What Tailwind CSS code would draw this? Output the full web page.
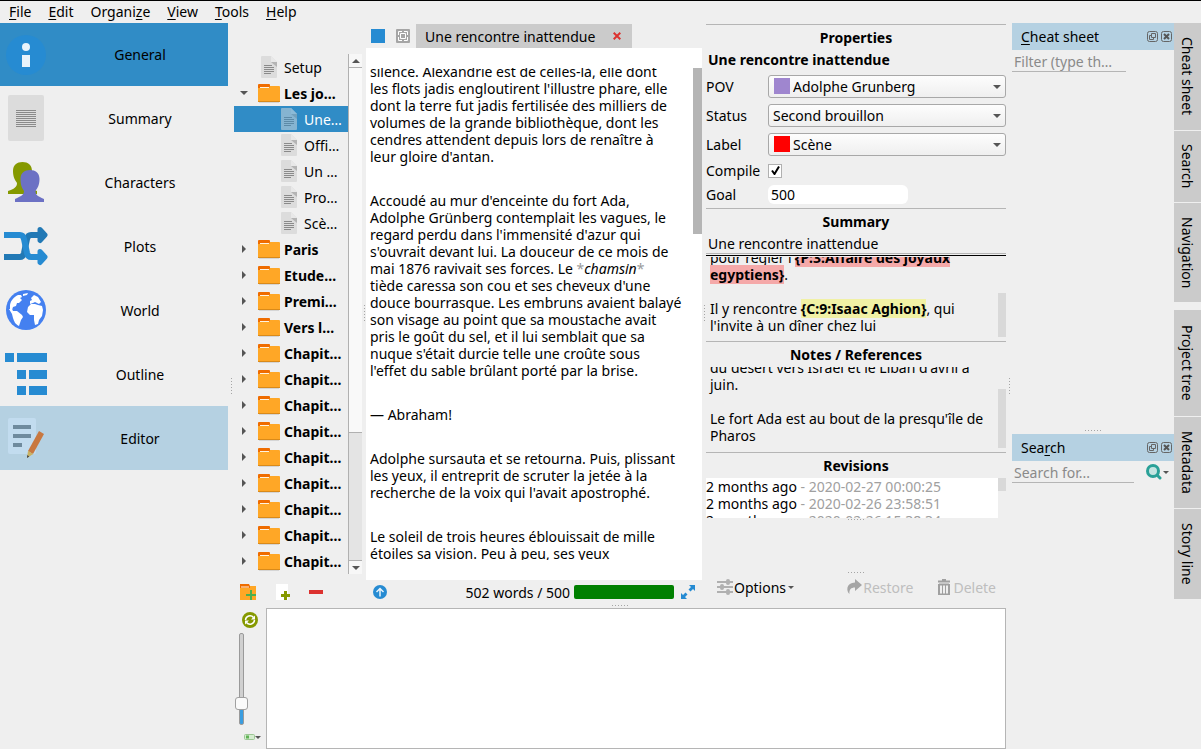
<!DOCTYPE html>
<html lang="fr">

<head>
  <title>Editor</title>
  <meta charset="UTF-8">
  <meta name="viewport" content="width=device-width, initial-scale=1">
  <script src="https://cdn.jsdelivr.net/npm/@tailwindcss/browser@4"></script>
</head>

<body class="flex h-screen flex-col overflow-hidden border-t border-black bg-[#efefef] font-['Noto_Sans',sans-serif] text-[14px] leading-[17px] text-black">

  <!-- Shared icons -->
  <svg class="hidden">
    <symbol id="doc" viewBox="0 0 16 22">
      <path d="M1 0h9l6 6v15a1 1 0 0 1-1 1H1a1 1 0 0 1-1-1V1a1 1 0 0 1 1-1z" fill="#dcdcdc" />
      <path d="M10 0l6 6h-6z" fill="#e8e8e8" />
      <path d="M10 6h6v5z" fill="#b4b4b4" />
      <path d="M3 9.500h8M3 11.500h10M3 13.500h10M3 15.500h10M3 17.500h7" stroke="#8a8a8a" />
    </symbol>
    <symbol id="folder" viewBox="0 0 22 19">
      <path d="M1 18h20v1H1z" fill="#d5d5d5" />
      <path d="M0 1q0-1 1-1h10q1 0 1 1v3H0z" fill="#ef6c00" />
      <path d="M2 3h9v2H2z" fill="#fff3e0" />
      <path d="M0 4h11l1-2h9q1 0 1 1v14q0 1-1 1H1q-1 0-1-1z" fill="#ffa726" />
      <path d="M0 17h22v1H0z" fill="#d98a1a" />
    </symbol>
    <symbol id="down" viewBox="0 0 8 4">
      <path d="M0 0h8L4 4z" fill="#555" />
    </symbol>
    <symbol id="float" viewBox="0 0 11 11">
      <rect x=".5" y=".5" width="10" height="10" rx="2" fill="none" stroke="#666" />
      <path d="M4.500 2.500h4v4h-4zM4 4.500H2.500v4h4V7" fill="none" stroke="#666" />
    </symbol>
    <symbol id="close" viewBox="0 0 11 11">
      <rect x=".5" y=".5" width="10" height="10" rx="2" fill="none" stroke="#666" />
      <path d="M3 3l5 5M8 3L3 8" stroke="#555" stroke-width="2" />
    </symbol>
  </svg>

  <nav class="flex h-[22px] shrink-0 items-start gap-[17px] pt-[2px] pl-[9px]">
    <a href="#"><u class="underline-offset-2">F</u>ile</a>
    <a href="#"><u class="underline-offset-2">E</u>dit</a>
    <a href="#">Organi<u class="underline-offset-2">z</u>e</a>
    <a href="#"><u class="underline-offset-2">V</u>iew</a>
    <a href="#"><u class="underline-offset-2">T</u>ools</a>
    <a href="#"><u class="underline-offset-2">H</u>elp</a>
  </nav>

  <div class="flex min-h-0 flex-1">

    <!-- Sections -->
    <aside class="flex w-[228px] shrink-0 flex-col">
      <a href="#" class="flex h-[63px] items-center bg-[#308cc6]">
        <span class="flex w-[52px] justify-center">
          <svg class="size-10" viewBox="0 0 40 40">
            <circle cx="20" cy="20" r="20" fill="#268bd2" />
            <circle cx="20" cy="12" r="4" fill="#e8f3fb" />
            <path d="M16 20h8v12h-8z" fill="#e8f3fb" />
          </svg>
        </span>
        <span class="flex-1 text-center">General</span>
      </a>
      <a href="#" class="flex h-16 items-center">
        <span class="flex w-[52px] justify-center">
          <svg class="h-[46px] w-9" viewBox="0 0 36 46">
            <rect width="36" height="46" rx="2" fill="#dcdcdc" />
            <path d="M8 15.500h20M8 17.500h20M8 19.500h20M8 21.500h20M8 23.500h20M8 25.500h20M8 27.500h20M8 29.500h20M8 31.500h20" stroke="#8a8a8a" />
          </svg>
        </span>
        <span class="flex-1 text-center">Summary</span>
      </a>
      <a href="#" class="flex h-16 items-center">
        <span class="flex w-[52px] justify-center">
          <svg class="h-10 w-9" viewBox="0 0 36 40">
            <path d="M5 9C5 3 9 0 14.500 0S24 3 24 9c0 6-2 9-4 12 0 4 2 5 9 8v3H0v-3c6-2 9-4 9-8C7 18 5 15 5 9z" fill="#859900" />
            <path d="M12.500 17c0-6 4-9 9.500-9s9.500 3 9.500 9c0 6-2 9-4 12 0 4 2 5 8.500 8v3H7v-3c6-3 9-4 9-8-2-3-3.500-6-3.500-12z" fill="#6c71c4" />
          </svg>
        </span>
        <span class="flex-1 text-center">Characters</span>
      </a>
      <a href="#" class="flex h-16 items-center">
        <span class="flex w-[52px] justify-center">
          <svg class="h-10 w-11" viewBox="0 0 44 40" fill="none" stroke-width="6" stroke-linejoin="round">
            <path d="M0 31h16q3 0 4-4l3-14q1-4 4-4h10" stroke="#2279b5" />
            <path d="M36 3.500L41 9l-5 5.500z" fill="#2279b5" stroke="#2279b5" stroke-width="5" />
            <path d="M0 9h16q3 0 4 4l3 14q1 4 4 4h10" stroke="#268bd2" />
            <path d="M36 25.500L41 31l-5 5.500z" fill="#268bd2" stroke="#268bd2" stroke-width="5" />
          </svg>
        </span>
        <span class="flex-1 text-center">Plots</span>
      </a>
      <a href="#" class="flex h-16 items-center">
        <span class="flex w-[52px] justify-center">
          <svg class="size-10" viewBox="0 0 40 40">
            <circle cx="20" cy="20" r="20" fill="#4480f0" />
            <path d="M4 15c1-5 4-8 8-10l3 0 1 2-2 1 2 2-3 3-2 0-1 3-3 1-1 3-2-1zM17 4l5-1-1 2-4 1z" fill="#fff" />
            <path d="M3 19l3 0 1 2 4-0 5 4 1 2-2 3-1 3-1 3C9 34 8 31 7 28l-1-4z" fill="#fff" />
            <path d="M25 8l3-3 4 2 3 5-2 2-4-2-2 1-3 1 0-3 2-1zM22 17l3-3 4 0 3 1 4 1 1 4-1 6-3 4-1 4-3 1-1-5 0-5-4 0-3-3z" fill="#fff" />
          </svg>
        </span>
        <span class="flex-1 text-center">World</span>
      </a>
      <a href="#" class="flex h-16 items-center">
        <span class="flex w-[52px] justify-center">
          <svg class="h-[42px] w-[42px]" viewBox="0 0 42 42" fill="#268bd2">
            <path d="M0 0h9v9H0zM12 0h30v9H12zM12 17h9v9h-9zM24 17h18v9H24zM12 33h9v9h-9zM24 33h18v9H24z" />
          </svg>
        </span>
        <span class="flex-1 text-center">Outline</span>
      </a>
      <a href="#" class="flex h-16 items-center bg-[#b5d1e2]">
        <span class="flex w-[52px] justify-center">
          <svg class="h-10 w-9" viewBox="0 0 36 40">
            <rect width="28" height="36" rx="2" fill="#c2dcef" />
            <path d="M5 9h18M5 18h18M5 27h9" stroke="#6f8b9e" stroke-width="4" />
            <path d="M31 13l5 3-11 20-5-3z" fill="#c87840" />
            <path d="M20 33l5 3-4 2z" fill="#c9b263" />
            <path d="M20 33l-1 7 6-4z" fill="#c9b263" />
            <path d="M19.300 37l-.3 3 2.300-1.500z" fill="#444" />
          </svg>
        </span>
        <span class="flex-1 text-center">Editor</span>
      </a>
    </aside>

    <div class="flex w-[6px] shrink-0 items-center justify-center">
      <span class="h-4 w-px bg-[repeating-linear-gradient(0deg,#a5a5a5_0_1px,transparent_1px_3px)]"></span>
    </div>

    <main class="flex min-w-0 flex-1 flex-col">
      <div class="flex min-h-0 flex-1">

        <!-- Project tree -->
        <section class="flex w-[128px] shrink-0 flex-col pt-[31px]">
          <div class="flex min-h-0 flex-1 overflow-hidden">
            <ul id="tree" class="min-w-0 flex-1 overflow-hidden"></ul>
            <div class="flex w-[14px] flex-col border-l border-[#b0b0b0] bg-[#e4e4e4]">
              <div class="flex h-[13px] items-center justify-center bg-[#f7f7f7]">
                <svg class="h-1 w-2 rotate-180"><use href="#down" /></svg>
              </div>
              <div class="h-[366px] border-y border-[#b0b0b0] bg-[#f9f9f9]"></div>
              <div class="flex-1"></div>
              <div class="flex h-[14px] items-center justify-center border-t border-[#b0b0b0] bg-[#f7f7f7]">
                <svg class="h-1 w-2"><use href="#down" /></svg>
              </div>
            </div>
          </div>
          <div class="flex h-[29px] shrink-0 items-start gap-[18px] pt-[10px] pl-[6px]">
            <button aria-label="Add folder">
              <svg class="size-4" viewBox="0 0 16 16">
                <path d="M0 0h9l1 2h6v14H0z" fill="#ef6c00" />
                <path d="M1 3h8" stroke="#fff3e0" />
                <path d="M0 4h10V2h6v14H0z" fill="#ffa726" />
                <path d="M11 6v10M6 11h10" stroke="#4caf50" stroke-width="2" />
              </svg>
            </button>
            <button aria-label="Add text">
              <svg class="size-4" viewBox="0 0 16 16">
                <path d="M2 0h12v16H2z" fill="#fff" />
                <path d="M11.500 7v9M7 11.500h9" stroke="#859900" stroke-width="3" />
              </svg>
            </button>
            <button aria-label="Remove">
              <svg class="size-4" viewBox="0 0 16 16"><path d="M1 6h14v4H1z" fill="#dc322f" /></svg>
            </button>
          </div>
        </section>

        <div class="flex w-1 shrink-0 items-center justify-center">
          <span class="h-4 w-px bg-[repeating-linear-gradient(0deg,#a5a5a5_0_1px,transparent_1px_3px)]"></span>
        </div>

        <!-- Text editor -->
        <section class="flex min-w-0 flex-1 flex-col">
          <div class="flex h-[25px] shrink-0 items-end">
            <button class="mr-[11px] mb-[5px] ml-[5px] size-[14px] bg-[#268bd2]" aria-label="Root"></button>
            <button class="mr-[6px] mb-[5px]" aria-label="Split">
              <svg class="size-[14px]" viewBox="0 0 14 14">
                <rect width="14" height="14" rx="1" fill="#a5a5a5" />
                <path d="M4.500 4.500h5v5h-5z" fill="none" stroke="#fff" />
                <path d="M2.500 6V2.500H6M8 2.500h3.500V6M11.500 8v3.500H8M6 11.500H2.500V8" fill="none" stroke="#fff" />
              </svg>
            </button>
            <div class="flex h-6 items-center gap-[18px] bg-[#cbcbcb] pr-[11px] pl-[9px]">
              <span>Une rencontre inattendue</span>
              <button aria-label="Close tab">
                <svg class="size-2" viewBox="0 0 8 8"><path d="M.7.7l6.600 6.600M7.300.7L.7 7.300" stroke="#dc322f" stroke-width="2" /></svg>
              </button>
            </div>
          </div>
          <div class="flex min-h-0 flex-1 bg-white py-5">
            <div class="min-w-0 flex-1 overflow-hidden whitespace-nowrap pl-1">
              <div class="-mt-[5px] space-y-[27px]">
                <p>silence. Alexandrie est de celles-là, elle dont<br>
                  les flots jadis engloutirent l'illustre phare, elle<br>
                  dont la terre fut jadis fertilisée des milliers de<br>
                  volumes de la grande bibliothèque, dont les<br>
                  cendres attendent depuis lors de renaître à<br>
                  leur gloire d'antan.</p>
                <p>Accoudé au mur d'enceinte du fort Ada,<br>
                  Adolphe Grünberg contemplait les vagues, le<br>
                  regard perdu dans l'immensité d'azur qui<br>
                  s'ouvrait devant lui. La douceur de ce mois de<br>
                  mai 1876 ravivait ses forces. Le <span class="text-[#9a9a9a]">*</span><i>chamsin</i><span class="text-[#9a9a9a]">*</span><br>
                  tiède caressa son cou et ses cheveux d'une<br>
                  douce bourrasque. Les embruns avaient balayé<br>
                  son visage au point que sa moustache avait<br>
                  pris le goût du sel, et il lui semblait que sa<br>
                  nuque s'était durcie telle une croûte sous<br>
                  l'effet du sable brûlant porté par la brise.</p>
                <p>— Abraham!</p>
                <p>Adolphe sursauta et se retourna. Puis, plissant<br>
                  les yeux, il entreprit de scruter la jetée à la<br>
                  recherche de la voix qui l'avait apostrophé.</p>
                <p>Le soleil de trois heures éblouissait de mille<br>
                  étoiles sa vision. Peu à peu, ses yeux</p>
              </div>
            </div>
            <div class="h-[166px] w-[9px] bg-[#b5b5b5]"></div>
          </div>
          <div class="flex h-[23px] shrink-0 items-center px-[7px] pt-px">
            <button aria-label="Go up">
              <svg class="size-[14px]" viewBox="0 0 14 14">
                <circle cx="7" cy="7" r="7" fill="#268bd2" />
                <path d="M7 11.500V4M3.500 7L7 3.500 10.500 7" fill="none" stroke="#e8f3fb" stroke-width="1.500" />
              </svg>
            </button>
            <span class="ml-auto">502 words / 500</span>
            <div class="mx-1 h-[14px] w-[100px] rounded-[2px] bg-[#008000]"></div>
            <button class="ml-[3px]" aria-label="Fullscreen">
              <svg class="size-[14px]" viewBox="0 0 14 14" fill="#268bd2">
                <path d="M8 0h6v6l-2-2-2.500 2.500-2-2L10 2zM0 8l2 2 2.500-2.500 2 2L4 12l2 2H0z" />
              </svg>
            </button>
          </div>
        </section>

        <div class="flex w-1 shrink-0 items-center justify-center">
          <span class="h-4 w-px bg-[repeating-linear-gradient(0deg,#a5a5a5_0_1px,transparent_1px_3px)]"></span>
        </div>

        <!-- Metadata -->
        <section class="flex w-[300px] shrink-0 flex-col pt-px">
          <form>
            <h2 class="flex h-[26px] items-center justify-center border-t border-[#b5b5b5] font-bold">Properties</h2>
            <h3 class="flex h-[18px] items-center pl-[2px] font-bold">Une rencontre inattendue</h3>
            <div class="mt-[7px] grid grid-cols-[62px_1fr] items-center gap-y-[6px]">
              <label for="pov">POV</label>
              <div class="relative">
                <select id="pov" class="block h-[23px] w-full appearance-none rounded-[3px] border border-[#a8a8a8] bg-linear-to-b from-[#fdfdfd] to-[#efefef] pl-6 leading-[21px]">
                  <option>Adolphe Grunberg</option>
                </select>
                <span class="absolute top-[3px] left-[6px] size-4 bg-[#9f86cf]"></span>
                <svg class="pointer-events-none absolute top-[10px] right-[5px] h-1 w-2"><use href="#down" /></svg>
              </div>
              <label for="status">Status</label>
              <div class="relative">
                <select id="status" class="block h-[23px] w-full appearance-none rounded-[3px] border border-[#a8a8a8] bg-linear-to-b from-[#fdfdfd] to-[#efefef] pl-1 leading-[21px]">
                  <option>Second brouillon</option>
                </select>
                <svg class="pointer-events-none absolute top-[10px] right-[5px] h-1 w-2"><use href="#down" /></svg>
              </div>
              <label for="label">Label</label>
              <div class="relative">
                <select id="label" class="block h-[23px] w-full appearance-none rounded-[3px] border border-[#a8a8a8] bg-linear-to-b from-[#fdfdfd] to-[#efefef] pl-6 leading-[21px]">
                  <option>Scène</option>
                </select>
                <span class="absolute top-[3px] left-[6px] size-4 bg-[#ff0000]"></span>
                <svg class="pointer-events-none absolute top-[10px] right-[5px] h-1 w-2"><use href="#down" /></svg>
              </div>
              <label for="compile">Compile</label>
              <div class="relative">
                <input id="compile" type="checkbox" checked class="block size-[14px] appearance-none border border-[#b0b0b0] bg-white">
                <svg class="pointer-events-none absolute top-[2px] left-[3px] size-[9px]" viewBox="0 0 9 9"><path d="M1 4.500L3.500 8 8 .5" fill="none" stroke="#000" stroke-width="2" /></svg>
              </div>
              <label for="goal">Goal</label>
              <input id="goal" value="500" class="h-[19px] w-[140px] rounded-[6px] bg-white pl-[3px]">
            </div>
          </form>

          <h2 class="mt-1 flex h-[26px] shrink-0 items-center justify-center border-t border-[#b5b5b5] font-bold">Summary</h2>
          <input aria-label="Short summary" value="Une rencontre inattendue" class="h-5 w-full shrink-0 border-b border-[#b5b5b5] pl-[2px]">
          <div class="mt-px flex h-[83px] shrink-0 border-t border-black pt-px">
            <div class="flex-1 overflow-hidden whitespace-nowrap pl-1">
              <p class="-mt-2">pour régler l'<b class="bg-[#f5a9a9]">{P:3:Affaire des joyaux</b><br>
                <b class="bg-[#f5a9a9]">egyptiens}</b>.<br><br>
                Il y rencontre <b class="bg-[#f1f1a5]">{C:9:Isaac Aghion}</b>, qui<br>
                l'invite à un dîner chez lui</p>
            </div>
            <div class="mt-9 h-11 w-2 bg-[#d9d9d9]"></div>
          </div>

          <h2 class="mt-[3px] flex h-[26px] shrink-0 items-center justify-center border-t border-[#b5b5b5] font-bold">Notes / References</h2>
          <div class="flex h-[81px] shrink-0">
            <div class="flex-1 overflow-hidden whitespace-nowrap pl-1">
              <p class="-mt-2">du désert vers Israël et le Liban d'avril à<br>juin.<br><br>
                Le fort Ada est au bout de la presqu'île de<br>Pharos</p>
            </div>
            <div class="mt-[22px] w-2 bg-[#d9d9d9]"></div>
          </div>

          <h2 class="mt-1 flex h-[26px] shrink-0 items-center justify-center border-t border-[#b5b5b5] font-bold">Revisions</h2>
          <div class="flex h-10 shrink-0">
            <ul class="flex-1 overflow-hidden bg-white">
              <li>2 months ago <span class="text-[#a0a0a0]">- 2020-02-27 00:00:25</span></li>
              <li>2 months ago <span class="text-[#a0a0a0]">- 2020-02-26 23:58:51</span></li>
              <li>2 months ago <span class="text-[#a0a0a0]">- 2020-02-26 15:38:34</span></li>
            </ul>
            <div class="h-[13px] w-2 bg-[#d9d9d9]"></div>
          </div>
          <span class="mx-auto mt-px h-px w-4 shrink-0 bg-[repeating-linear-gradient(90deg,#a5a5a5_0_1px,transparent_1px_3px)]"></span>
          <span class="mx-auto mt-auto h-px w-4 shrink-0 bg-[repeating-linear-gradient(90deg,#a5a5a5_0_1px,transparent_1px_3px)]"></span>
          <div class="flex h-[30px] shrink-0 items-center pr-[10px] pb-[2px] pl-[11px]">
            <button class="flex items-center">
              <svg class="mr-px size-4" viewBox="0 0 16 16" fill="#b0b0b0">
                <path d="M0 2h16v2H0zM0 7h16v2H0zM0 12h16v2H0z" />
                <rect x="9" width="4" height="6" rx="2" /><rect x="3" y="5" width="4" height="6" rx="2" /><rect x="9" y="10" width="4" height="6" rx="2" />
              </svg>
              Options
              <svg class="ml-[2px] h-[3px] w-[6px]"><use href="#down" /></svg>
            </button>
            <button disabled class="ml-auto flex items-center text-[#bebebe]">
              <svg class="mr-px size-4" viewBox="0 0 16 16"><path d="M9 0l7 6-7 6V8.500C5 8.500 3 10.500 3.500 15 0 12 0 4 9 3.500z" fill="#a5a5a5" /></svg>
              Restore
            </button>
            <button disabled class="ml-[25px] flex items-center text-[#bebebe]">
              <svg class="mr-[3px] h-4 w-3" viewBox="0 0 12 16" fill="none" stroke="#a0a0a0">
                <path d="M0 2.500h12M4 .5h4M1 5v10.500h10V5M1 5.500h10" stroke-width="2" />
                <path d="M4.500 6v9M7.500 6v9" />
              </svg>
              Delete
            </button>
          </div>
        </section>
      </div>

      <div class="flex h-[5px] shrink-0 items-center justify-center">
        <span class="h-px w-4 bg-[repeating-linear-gradient(90deg,#a5a5a5_0_1px,transparent_1px_3px)]"></span>
      </div>

      <!-- Storyline -->
      <section class="flex h-[141px] shrink-0">
        <div class="flex w-8 flex-col items-start pt-1">
          <button class="ml-2" aria-label="Refresh">
            <svg class="size-4" viewBox="0 0 16 16">
              <circle cx="8" cy="8" r="8" fill="#859900" />
              <path d="M3.500 8a4.500 4.500 0 0 1 8-2.500M12.500 8a4.500 4.500 0 0 1-8 2.500" fill="none" stroke="#fff" stroke-width="1.500" />
              <path d="M13 3.500v4H9zM3 12.500v-4h4z" fill="#fff" />
            </svg>
          </button>
          <input type="range" aria-label="Zoom" min="0" max="100" value="18"
            class="mt-[5px] h-[92px] w-[14px] appearance-none [direction:rtl] [writing-mode:vertical-lr] [&::-webkit-slider-runnable-track]:mx-auto [&::-webkit-slider-runnable-track]:w-[5px] [&::-webkit-slider-runnable-track]:rounded-[2px] [&::-webkit-slider-runnable-track]:border [&::-webkit-slider-runnable-track]:border-[#9a9a9a] [&::-webkit-slider-runnable-track]:bg-[linear-gradient(#d0d0d0_0_75%,#3a9de0_75%)] [&::-webkit-slider-thumb]:-ml-[5px] [&::-webkit-slider-thumb]:size-[13px] [&::-webkit-slider-thumb]:appearance-none [&::-webkit-slider-thumb]:rounded-[3px] [&::-webkit-slider-thumb]:border [&::-webkit-slider-thumb]:border-[#a0a0a0] [&::-webkit-slider-thumb]:bg-[#fafafa]">
          <button class="mt-[9px] ml-[10px] flex items-center" aria-label="Row size">
            <svg class="h-[6px] w-[11px]" viewBox="0 0 11 6">
              <rect x=".5" y=".5" width="10" height="5" rx="1" fill="#d5ecd0" stroke="#9cc795" />
              <path d="M2 1.500h3v3H2z" fill="#5fb355" />
            </svg>
            <svg class="h-[3px] w-[6px]"><use href="#down" /></svg>
          </button>
        </div>
        <textarea aria-label="Story line" class="min-w-0 flex-1 resize-none border border-[#b5b5b5] bg-white"></textarea>
      </section>
    </main>

    <div class="flex w-[6px] shrink-0 items-center justify-center">
      <span class="h-4 w-px bg-[repeating-linear-gradient(0deg,#a5a5a5_0_1px,transparent_1px_3px)]"></span>
    </div>

    <!-- Docks -->
    <aside class="flex w-[162px] shrink-0 flex-col">
      <div class="flex h-[407px] flex-col">
        <div class="flex h-[27px] items-center bg-[#b5d1e2] pr-[2px] pl-[9px]">
          <h2 class="flex-1"><u class="underline-offset-2">C</u>heat sheet</h2>
          <button class="mr-[3px]" aria-label="Float"><svg class="size-[11px]"><use href="#float" /></svg></button>
          <button aria-label="Close"><svg class="size-[11px]"><use href="#close" /></svg></button>
        </div>
        <input aria-label="Filter" placeholder="Filter (type th…" class="h-[22px] w-[114px] border-b border-[#b5b5b5] pt-[2px] pl-[2px] placeholder:text-[#8a8a8a]">
      </div>
      <span class="mx-auto mb-[3px] h-px w-4 bg-[repeating-linear-gradient(90deg,#a5a5a5_0_1px,transparent_1px_3px)]"></span>
      <div class="flex h-[27px] items-center bg-[#b5d1e2] pr-[2px] pl-[9px]">
        <h2 class="flex-1">Sea<u class="underline-offset-2">r</u>ch</h2>
        <button class="mr-[3px]" aria-label="Float"><svg class="size-[11px]"><use href="#float" /></svg></button>
        <button aria-label="Close"><svg class="size-[11px]"><use href="#close" /></svg></button>
      </div>
      <div class="flex items-center">
        <input aria-label="Search" placeholder="Search for..." class="h-[22px] w-[122px] border-b border-[#b5b5b5] pt-[2px] pl-[2px] placeholder:text-[#8a8a8a]">
        <button class="ml-3 flex items-center" aria-label="Search options">
          <svg class="size-4" viewBox="0 0 16 16">
            <path d="M10 10l4 4" stroke="#2aa198" stroke-width="3" stroke-linecap="round" />
            <circle cx="7" cy="7" r="5.500" fill="#c5e5e2" stroke="#2aa198" stroke-width="3" />
          </svg>
          <svg class="ml-px h-[3px] w-[6px]"><use href="#down" /></svg>
        </button>
      </div>
    </aside>

    <nav class="flex w-[27px] shrink-0 flex-col gap-px">
      <button class="flex h-[107px] items-center justify-center bg-[#cbcbcb] [writing-mode:vertical-rl]">Cheat sheet</button>
      <button class="flex h-[71px] items-center justify-center bg-[#cbcbcb] [writing-mode:vertical-rl]">Search</button>
      <button class="mb-[7px] flex h-[99px] items-center justify-center bg-[#cbcbcb] [writing-mode:vertical-rl]">Navigation</button>
      <button class="flex h-[106px] items-center justify-center bg-[#cbcbcb] [writing-mode:vertical-rl]">Project tree</button>
      <button class="flex h-[91px] items-center justify-center bg-[#cbcbcb] [writing-mode:vertical-rl]">Metadata</button>
      <button class="flex h-[90px] items-center justify-center bg-[#cbcbcb] [writing-mode:vertical-rl]">Story line</button>
    </nav>
  </div>

  <script>
    const tree = document.querySelector("#tree");

    const items = [
      { type: "root", title: "Setup" },
      { type: "folder", title: "Les jo…", open: true },
      { type: "text", title: "Une…", selected: true },
      { type: "text", title: "Offi…" },
      { type: "text", title: "Un …" },
      { type: "text", title: "Pro…" },
      { type: "text", title: "Scè…" },
      { type: "folder", title: "Paris" },
      { type: "folder", title: "Etude…" },
      { type: "folder", title: "Premi…" },
      { type: "folder", title: "Vers l…" },
    ];
    for (let i = 0; i < 9; i++) {
      items.push({ type: "folder", title: "Chapit…" });
    }

    const row = item => {
      if (item.type === "folder") {
        const arrow = item.open ? "" : "-rotate-90";
        return `<li class="flex h-[26px] items-center whitespace-nowrap pl-[6px] font-bold">
          <svg class="mr-[10px] h-1 w-2 shrink-0 ${arrow}"><use href="#down" /></svg>
          <svg class="mr-1 h-[19px] w-[22px] shrink-0"><use href="#folder" /></svg>${item.title}</li>`;
      }
      const indent = item.type === "root" ? "pl-[27px]" : "pl-[47px]";
      const color = item.selected ? "bg-[#308cc6] text-white" : "";
      const fade = item.selected ? "opacity-50" : "";
      return `<li class="flex h-[26px] items-center whitespace-nowrap ${indent} ${color}">
        <svg class="mr-[7px] h-[22px] w-4 shrink-0 ${fade}"><use href="#doc" /></svg>${item.title}</li>`;
    };

    tree.innerHTML = items.map(row).join("");
  </script>
</body>

</html>
